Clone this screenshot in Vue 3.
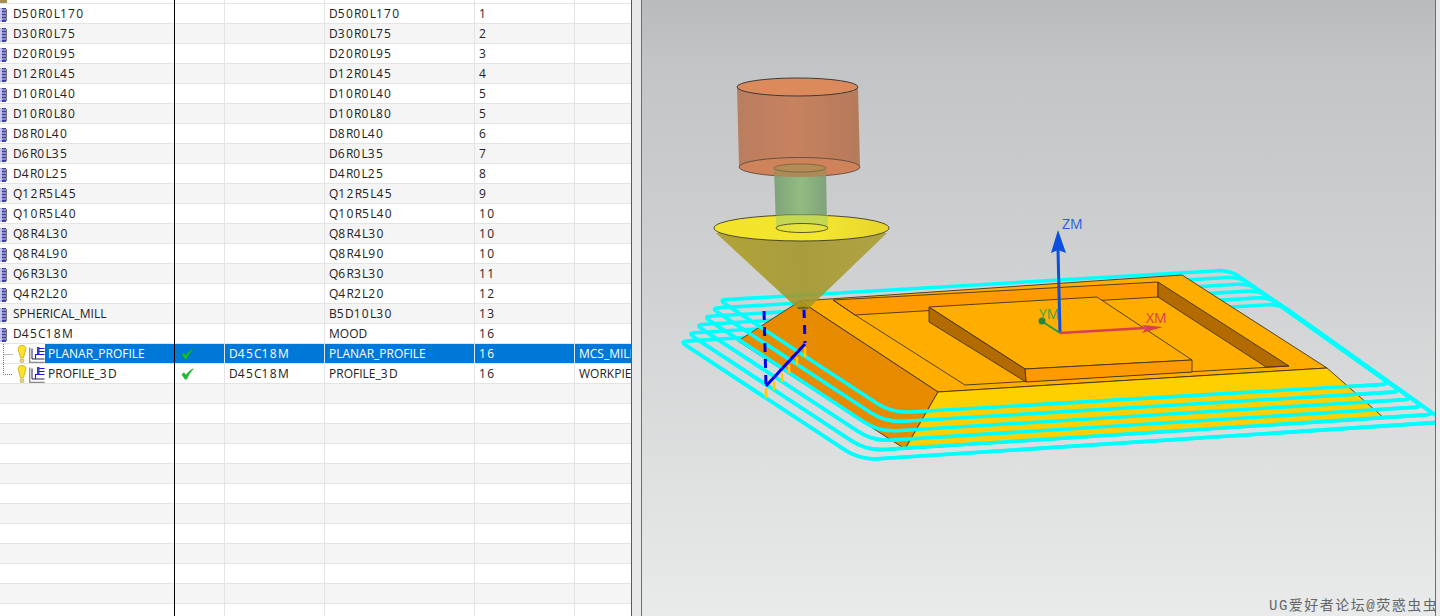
<script setup>
const tools = [
  ['D50R0L170', 'D50R0L170', '1'],
  ['D30R0L75', 'D30R0L75', '2'],
  ['D20R0L95', 'D20R0L95', '3'],
  ['D12R0L45', 'D12R0L45', '4'],
  ['D10R0L40', 'D10R0L40', '5'],
  ['D10R0L80', 'D10R0L80', '5'],
  ['D8R0L40', 'D8R0L40', '6'],
  ['D6R0L35', 'D6R0L35', '7'],
  ['D4R0L25', 'D4R0L25', '8'],
  ['Q12R5L45', 'Q12R5L45', '9'],
  ['Q10R5L40', 'Q10R5L40', '10'],
  ['Q8R4L30', 'Q8R4L30', '10'],
  ['Q8R4L90', 'Q8R4L90', '10'],
  ['Q6R3L30', 'Q6R3L30', '11'],
  ['Q4R2L20', 'Q4R2L20', '12'],
  ['SPHERICAL_MILL', 'B5D10L30', '13'],
  ['D45C18M', 'MOOD', '16'],
]

const operations = [
  { name: 'PLANAR_PROFILE', tool: 'D45C18M', geom: 'MCS_MILL', selected: true },
  { name: 'PROFILE_3D', tool: 'D45C18M', geom: 'WORKPIECE', selected: false },
]

const emptyRows = Array.from({ length: 12 }, (_, i) => i)

// digits in the reference font are wider than in Open Sans
function parts(text) {
  return text.split(/(\d+)/).filter(Boolean)
}
function isNum(s) {
  return /^\d/.test(s)
}

// one corner of a toolpath loop, cut back by r along both edges
function cut(a, b, r) {
  const len = Math.hypot(a[0] - b[0], a[1] - b[1])
  return [b[0] + ((a[0] - b[0]) * r) / len, b[1] + ((a[1] - b[1]) * r) / len]
}

function fmt(p) {
  return p[0].toFixed(1) + ' ' + p[1].toFixed(1)
}

const loops = [0, 1, 2, 3, 4, 5].map((i) => {
  const L = [719 - 7.8 * i, 300 + 8.3 * i]
  const B = [892 - 6.4 * i, 413 + 9.4 * i]
  const R = [1390 + 11 * i, 384 + 7.6 * i]
  const T = [1230 + 10 * i, 270 + 6.8 * i]
  const front =
    'M' + fmt(cut(B, L, 7)) +
    'L' + fmt(cut(L, B, 18)) +
    'Q' + fmt(B) + ' ' + fmt(cut(R, B, 18)) +
    'L' + fmt(cut(B, R, 8)) +
    'Q' + fmt(R) + ' ' + fmt(cut(T, R, 8))
  const full =
    front +
    'L' + fmt(cut(R, T, 12)) +
    'Q' + fmt(T) + ' ' + fmt(cut(L, T, 12)) +
    'L' + fmt(cut(T, L, 7)) +
    'Q' + fmt(L) + ' ' + fmt(cut(B, L, 7))
  return { full, front }
})

const plunges = [
  [766, 388, 398],
  [774, 382, 390],
  [782, 373, 382],
  [789, 365, 373],
  [797, 357, 365],
  [805, 347, 357],
]
</script>

<template>
  <div class="page">
    <section class="table">
      <div class="row stub">
        <div class="cell c1"><span class="stubIcon"></span></div>
        <div class="cell c2"></div>
        <div class="cell c3"></div>
        <div class="cell c4"></div>
        <div class="cell c5"></div>
        <div class="cell c6"></div>
      </div>

      <div v-for="(t, i) in tools" :key="t[0]" class="row" :class="{ alt: i % 2 === 1 }">
        <div class="cell c1">
          <svg class="toolIcon" width="7" height="14" viewBox="0 0 7 14">
            <rect x="0" y="0" width="6" height="14" fill="#b9b9e2" />
            <rect x="2" y="0" width="4" height="14" fill="#3d3dab" />
            <path d="M0 2h6M0 5h6M0 8h6M0 11h6" stroke="#d6d6ee" stroke-width="1" />
            <rect x="6" y="1" width="1" height="12" fill="#777" />
          </svg>
          <span class="name"><span v-for="(s, k) in parts(t[0])" :key="k" :class="{ num: isNum(s) }">{{ s }}</span></span>
        </div>
        <div class="cell c2"></div>
        <div class="cell c3"></div>
        <div class="cell c4"><span v-for="(s, k) in parts(t[1])" :key="k" :class="{ num: isNum(s) }">{{ s }}</span></div>
        <div class="cell c5"><span class="num">{{ t[2] }}</span></div>
        <div class="cell c6"></div>
      </div>

      <div v-for="(op, i) in operations" :key="op.name" class="row" :class="{ selected: op.selected }">
        <div class="cell c1 opCell">
          <svg class="tree" width="14" height="20" viewBox="0 0 14 20">
            <path v-if="i === 0" d="M3.500 0v20M3.500 10.500h9" stroke="#777" stroke-dasharray="1 1" fill="none" />
            <path v-else d="M3.500 0v10.500h9" stroke="#777" stroke-dasharray="1 1" fill="none" />
          </svg>
          <svg class="bulb" width="10" height="18" viewBox="0 0 10 18">
            <path d="M5 .6C8.400.6 9.200 2.800 8.700 4.800L6.400 12.800H3.600L1.300 4.800C.8 2.800 1.600.6 5 .6Z" fill="#ffe22e" stroke="#c9a400" stroke-width=".8" />
            <rect x="3.200" y="14" width="3.600" height="3.400" rx="1" fill="#e8dc7a" stroke="#a39a62" stroke-width=".6" />
          </svg>
          <svg class="opIcon" width="16" height="17" viewBox="0 0 16 17">
            <path d="M.7 1.500v14.800h15" fill="none" stroke="#8c8c8c" stroke-width="1.300" />
            <path d="M3 2.500v10.500h12.500" fill="none" stroke="#20205a" stroke-width="1" />
            <path d="M6.500 13V8.500H15.500M9.500 8.500V1M9.500 2.500h6M9.500 5.500h6" fill="none" stroke="#1c1ccf" stroke-width="1.100" />
            <rect x="8" y="1" width="2.500" height="7" fill="#3a3ad6" />
          </svg>
          <span class="opName"><span v-for="(s, k) in parts(op.name)" :key="k" :class="{ num: isNum(s) }">{{ s }}</span></span>
        </div>
        <div class="cell c2 checkCell">
          <svg width="13" height="12" viewBox="0 0 13 12">
            <path d="M.8 6.500 3 4.800 5 7.300C6.800 4.500 9 2.200 12.300.8 9.800 3.500 7.600 6.800 5.600 11.200H4.200Z" fill="#17c22c" stroke="#0b9a1d" stroke-width=".5" />
          </svg>
        </div>
        <div class="cell c3"><span v-for="(s, k) in parts(op.tool)" :key="k" :class="{ num: isNum(s) }">{{ s }}</span></div>
        <div class="cell c4"><span v-for="(s, k) in parts(op.name)" :key="k" :class="{ num: isNum(s) }">{{ s }}</span></div>
        <div class="cell c5"><span class="num">16</span></div>
        <div class="cell c6">{{ op.geom }}</div>
      </div>

      <div v-for="i in emptyRows" :key="i" class="row" :class="{ alt: i % 2 === 0 }">
        <div class="cell c1"></div>
        <div class="cell c2"></div>
        <div class="cell c3"></div>
        <div class="cell c4"></div>
        <div class="cell c5"></div>
        <div class="cell c6"></div>
      </div>
    </section>

    <div class="gutter"></div>

    <section class="viewport">
      <svg class="scene" width="793" height="616" viewBox="642 0 793 616">
        <defs>
          <linearGradient id="bg" x1="0" y1="0" x2="0" y2="1">
            <stop offset="0" stop-color="#b9babb" />
            <stop offset="0.1" stop-color="#c3c4c5" />
            <stop offset="0.45" stop-color="#d0d1d2" />
            <stop offset="1" stop-color="#e9eaea" />
          </linearGradient>
          <linearGradient id="holder" x1="0" y1="0" x2="1" y2="0">
            <stop offset="0" stop-color="#b87a5b" />
            <stop offset="0.45" stop-color="#c87f5a" />
            <stop offset="1" stop-color="#b47756" />
          </linearGradient>
          <linearGradient id="shank" x1="0" y1="0" x2="1" y2="0">
            <stop offset="0" stop-color="#7fa27b" />
            <stop offset="0.5" stop-color="#93bb81" />
            <stop offset="1" stop-color="#7fa27b" />
          </linearGradient>
          <linearGradient id="cone" x1="0" y1="0" x2="1" y2="0">
            <stop offset="0" stop-color="#ae9d22" />
            <stop offset="0.5" stop-color="#a3962a" />
            <stop offset="1" stop-color="#ab9c30" />
          </linearGradient>
          <linearGradient id="coneTop" x1="0" y1="0" x2="1" y2="0">
            <stop offset="0" stop-color="#f2e42a" />
            <stop offset="0.6" stop-color="#f3e62e" />
            <stop offset="1" stop-color="#e6d52e" />
          </linearGradient>
        </defs>

        <rect x="642" y="0" width="793" height="616" fill="url(#bg)" />

        <!-- toolpath behind the part -->
        <path v-for="(l, i) in loops" :key="'b' + i" :d="l.full" class="cut" />

        <!-- part -->
        <g class="edges">
          <polygon points="800,301 1182,275 1327,368 938,392" fill="#ffae00" />
          <polygon points="738,341 800,301 938,392 905,449" fill="#e68a00" />
          <polygon points="938,392 1327,368 1384,418 905,449" fill="#ffd000" />
          <polygon points="833,300 1158,282 1158,297 855,315" fill="#ff9a00" />
          <polygon points="1158,282 1289,366 1266,367 1158,297" fill="#b36b00" />
          <polyline points="833,300 855,315 965,385 1289,366" fill="none" />
          <polygon points="929,307 1097,297 1192,360 1025,369" fill="#ffae00" />
          <polygon points="1025,369 1192,360 1192,372 1026,382" fill="#ff9a00" />
          <polygon points="929,307 1025,369 1026,382 929,322" fill="#b36b00" />
        </g>

        <!-- axes -->
        <path d="M1060 333 1058 250" stroke="#0b4fdc" stroke-width="3" fill="none" />
        <path d="M1058 230 1066 253 1058 250 1051 253Z" fill="#0b4fdc" />
        <path d="M1060 333 1145 328" stroke="#d8404f" stroke-width="2.500" fill="none" />
        <path d="M1163 327 1142 333 1146 328 1142 325Z" fill="#d8404f" />
        <path d="M1060 333 1043 322" stroke="#239c46" stroke-width="2" fill="none" />
        <circle cx="1042" cy="321" r="3.500" fill="#23873f" />
        <text x="1062" y="229" class="axis" fill="#1f5fe0">ZM</text>
        <text x="1146" y="323" class="axis" fill="#d8404f">XM</text>
        <text x="1039" y="319" class="axis" fill="#3fa04a">YM</text>

        <!-- toolpath in front of the part -->
        <path v-for="(l, i) in loops" :key="'f' + i" :d="l.front" class="cut" />

        <line v-for="(p, i) in plunges" :key="'p' + i" :x1="p[0]" :y1="p[1]" :x2="p[0]" :y2="p[2]" stroke="#ffc800" stroke-width="2.500" />
        <path d="M764 311 766 385" class="rapid" />
        <path d="M804 309 805 343" class="rapid" />
        <path d="M766 386 805 344" stroke="#0000f0" stroke-width="3" fill="none" />

        <!-- cutter -->
        <path d="M737 87 739 167A61 9.500 0 0 0 860 167L858 87Z" fill="url(#holder)" opacity=".96" />
        <ellipse cx="799.500" cy="167" rx="60.500" ry="9.500" fill="#cf835a" stroke="#4d4440" stroke-width=".8" />
        <ellipse cx="797.500" cy="87" rx="60.500" ry="9" fill="#dc8a5c" stroke="#3c3a3a" stroke-width="1" />
        <path d="M774 168 776 228H827L826 168Z" fill="url(#shank)" />
        <path d="M774 168V176Q800 178 826 176V168Z" fill="#ab8a58" />
        <ellipse cx="800" cy="168" rx="26" ry="4" fill="#b48a55" stroke="#6d5b3f" stroke-width=".7" />
        <path d="M716 233 797 308A6 2 0 0 0 809 308L887 233Z" fill="url(#cone)" opacity=".88" />
        <ellipse cx="801.500" cy="228" rx="87.500" ry="13" fill="url(#coneTop)" stroke="#3e3a28" stroke-width=".9" />
        <path d="M776 215.500V226A26 4.500 0 0 0 828 226V215.500Q802 214 776 215.500Z" fill="#b9d55a" opacity=".8" />
        <ellipse cx="802" cy="228" rx="26" ry="4.500" fill="#e6e33c" stroke="#4d4a24" stroke-width=".9" />
        <ellipse cx="803" cy="308" rx="6" ry="1.500" fill="#77681f" />

        <text x="1269" y="610" class="mark">UG爱好者论坛@荧惑虫虫</text>
      </svg>
    </section>

    <div class="sliver"></div>
  </div>
</template>

<style scoped>
.page {
  display: flex;
  width: 1440px;
  height: 616px;
  overflow: hidden;
  background: #fff;
  font-family: "Open Sans", "Noto Sans", sans-serif;
  font-size: 12px;
  color: #222;
}

/* tabela */
.table {
  width: 631px;
  flex: none;
  overflow: hidden;
}
.row {
  display: flex;
  height: 20px;
  border-bottom: 1px solid #e4e4e4;
  box-sizing: border-box;
  background: #fff;
}
.row.alt {
  background: #f5f5f5;
}
.row.stub {
  height: 4px;
}
.cell {
  display: flex;
  align-items: center;
  box-sizing: border-box;
  border-right: 1px solid #e4e4e4;
  padding-left: 4px;
  padding-bottom: 2px;
  white-space: nowrap;
  overflow: hidden;
  margin-bottom: -1px;
}
.num {
  letter-spacing: 1.3px;
}
.c1 {
  width: 175px;
  padding-left: 0;
  border-right-color: #000;
}
.c2 {
  width: 50px;
}
.c3 {
  width: 100px;
}
.c4 {
  width: 150px;
}
.c5 {
  width: 100px;
}
.c6 {
  width: 56px;
  border-right: none;
}
.stub .cell {
  padding-bottom: 0;
}
.stubIcon {
  width: 7px;
  height: 3px;
  align-self: flex-start;
  background: #a58f55;
}
.toolIcon {
  flex: none;
  margin-top: 4px;
}
.name {
  margin-left: 6px;
}
.opCell,
.checkCell {
  padding-bottom: 0;
}
.tree {
  flex: none;
}
.bulb {
  flex: none;
  margin-left: 3px;
}
.opIcon {
  flex: none;
  margin-left: 2px;
}
.opName {
  flex: 1;
  display: flex;
  align-items: center;
  align-self: stretch;
  padding-left: 3px;
  padding-bottom: 1px;
  margin-bottom: 1px;
}
.checkCell {
  padding-left: 6px;
}
.row.selected {
  color: #fff;
}
.row.selected .c2,
.row.selected .c3,
.row.selected .c4,
.row.selected .c5,
.row.selected .c6,
.row.selected .opName {
  background: #0078d7;
}
.row.selected .c2,
.row.selected .c3,
.row.selected .c4,
.row.selected .c5,
.row.selected .c6 {
  margin-bottom: 0;
  padding-bottom: 1px;
}
.row.selected .checkCell {
  padding-bottom: 0;
}

/* divisor */
.gutter {
  width: 11px;
  flex: none;
  box-sizing: border-box;
  background: #e9e9e9;
  border-left: 1px solid #5a5a5a;
  border-right: 1px solid #6e6e6e;
}

/* vista 3D */
.viewport {
  width: 793px;
  flex: none;
  height: 616px;
}
.scene {
  display: block;
}
.sliver {
  flex: 1;
  background: #e9e9e9;
  border-left: 1px solid #6e6e6e;
}
.edges polygon,
.edges polyline {
  stroke: #43341a;
  stroke-width: 0.9;
}
.cut {
  fill: none;
  stroke: #00ffff;
  stroke-width: 3.6;
}
.rapid {
  fill: none;
  stroke: #0000f0;
  stroke-width: 3;
  stroke-dasharray: 9 7;
}
.axis {
  font-family: "Open Sans", sans-serif;
  font-size: 14px;
}
.mark {
  font-family: "Liberation Mono", "Noto Sans CJK SC", monospace;
  font-size: 14px;
  letter-spacing: 1.5px;
  fill: #666;
}
</style>

<style>
html,
body {
  overflow: hidden;
}
</style>
